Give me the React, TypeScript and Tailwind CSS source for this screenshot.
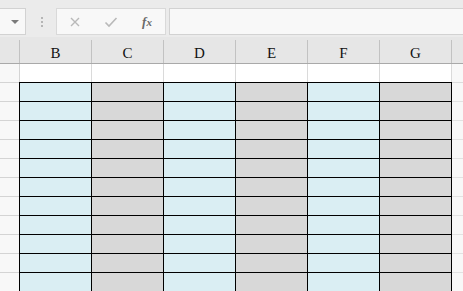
import React from "react";

const cols = ["B", "C", "D", "E", "F", "G"];
const rows = Array.from({ length: 11 }, (_, i) => i);

export default function App() {
  return (
    <div className="w-[463px] h-[291px] overflow-hidden bg-[#f7f7f7] relative" style={{ fontFamily: '"Liberation Sans", sans-serif' }}>
      {/* toolbar */}
      <div className="h-[37px] bg-[#ebebeb] flex items-start pt-[8px]">
        <div className="w-[26px] h-[27px] bg-[#f8f8f8] border border-l-0 border-[#d2d2d2] flex items-center justify-end pr-[6px]">
          <div className="w-0 h-0 border-l-[4px] border-r-[4px] border-t-[4px] border-l-transparent border-r-transparent border-t-[#7a7a7a]" />
        </div>
        <div className="w-[30px] h-[27px] flex flex-col items-center justify-center gap-[2px] pl-[1px]">
          <div className="w-[2px] h-[2px] bg-[#b5b5b5]" />
          <div className="w-[2px] h-[2px] bg-[#b5b5b5]" />
          <div className="w-[2px] h-[2px] bg-[#b5b5b5]" />
        </div>
        <div className="w-[110px] h-[27px] bg-[#f8f8f8] border border-[#d9d9d9] flex items-center">
          <div className="w-[36px] flex justify-center ml-[0px]">
            <svg width="12" height="12" viewBox="0 0 12 12">
              <path d="M2 2 L10 10 M10 2 L2 10" stroke="#b9b9b9" strokeWidth="1.4" />
            </svg>
          </div>
          <div className="w-[36px] flex justify-center">
            <svg width="14" height="12" viewBox="0 0 14 12">
              <path d="M1.5 6.5 L5 10 L12.5 2" stroke="#b9b9b9" strokeWidth="1.6" fill="none" />
            </svg>
          </div>
          <div className="w-[36px] flex justify-center">
            <span className="italic text-[13px] font-bold text-[#6a6a6a] leading-none" style={{ fontFamily: '"Liberation Serif", serif' }}>
              f<span className="text-[11px]">x</span>
            </span>
          </div>
        </div>
        <div className="w-[3px]" />
        <div className="flex-1 h-[27px] bg-[#f8f8f8] border border-r-0 border-[#d2d2d2]" />
      </div>

      {/* column header */}
      <div className="h-[27px] bg-[#e6e6e6] border-b border-[#a9a9a9] flex" style={{ fontFamily: '"Liberation Serif", serif' }}>
        <div className="w-[20px] h-full flex flex-col">
          <div className="h-[3px]" />
          <div className="flex-1 border-r border-[#c2c2c2]" />
        </div>
        {cols.map((c) => (
          <div key={c} className="w-[72px] h-full flex flex-col">
            <div className="h-[3px]" />
            <div className="flex-1 border-r border-[#c2c2c2] flex items-end justify-center pb-[2px] text-[15px] text-[#111] leading-none">
              {c}
            </div>
          </div>
        ))}
        <div className="flex-1" />
      </div>

      {/* white row 1 */}
      <div className="h-[18px] flex">
        <div className="w-[20px] h-full bg-[#f8f8f8] border-r border-[#d4d4d4]" />
        {cols.map((c) => (
          <div key={c} className="w-[72px] h-full bg-white border-r border-[#dadada]" />
        ))}
        <div className="flex-1 bg-[#f8f8f8]" />
      </div>

      {/* table rows */}
      <div className="flex">
        <div className="w-[19px] flex flex-col">
          <div className="h-[1px] bg-[#d4d4d4]" />
          {rows.map((r) => (
            <div key={r} className="h-[19px] bg-[#f8f8f8] border-b border-[#d4d4d4]" />
          ))}
        </div>
        <div className="flex flex-col border-l border-t border-black">
          {rows.map((r) => (
            <div key={r} className="flex h-[19px]">
              {cols.map((c, i) => (
                <div
                  key={c}
                  className={
                    "w-[72px] h-full border-r border-b border-black " +
                    (i % 2 === 0 ? "bg-[#daeef3]" : "bg-[#d8d8d8]")
                  }
                />
              ))}
            </div>
          ))}
        </div>
        <div className="flex-1 flex flex-col">
          <div className="h-[1px] bg-[#dcdcdc]" />
          {rows.map((r) => (
            <div key={r} className="h-[19px] bg-[#f8f8f8] border-b border-[#e2e2e2]" />
          ))}
        </div>
      </div>
    </div>
  );
}
